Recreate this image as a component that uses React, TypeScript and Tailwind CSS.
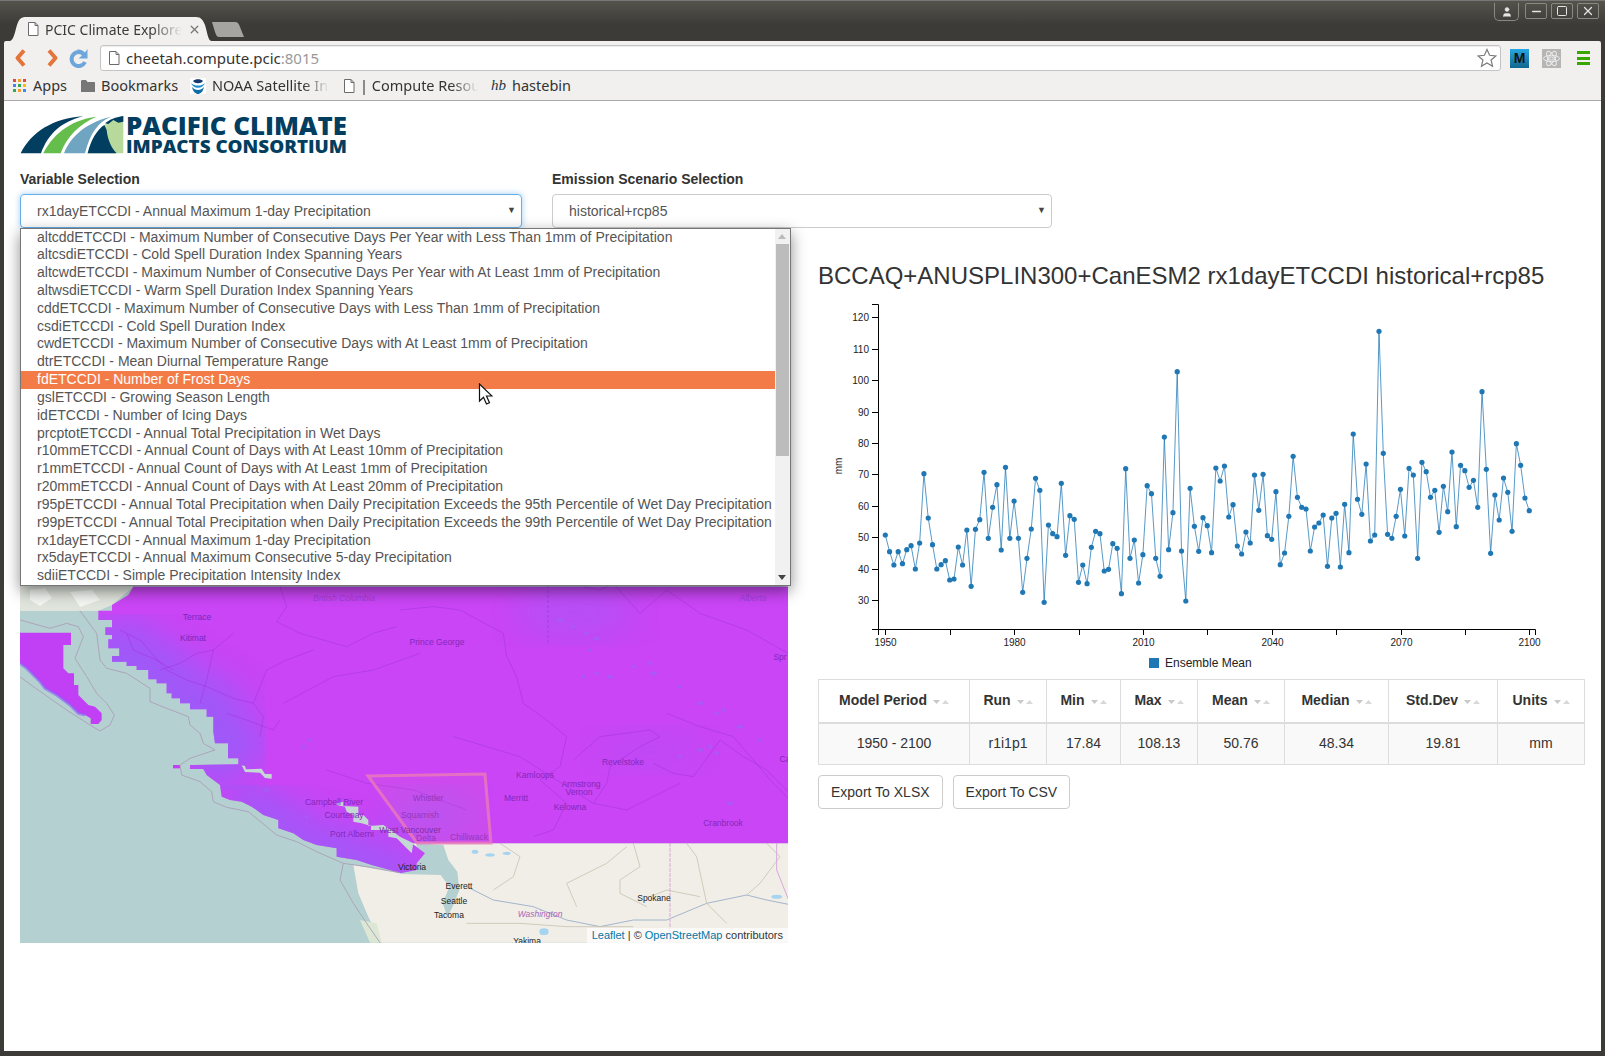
import React from 'react';
import { X, Minus, Square, User } from 'lucide-react';

const options = [
  'altcddETCCDI - Maximum Number of Consecutive Days Per Year with Less Than 1mm of Precipitation',
  'altcsdiETCCDI - Cold Spell Duration Index Spanning Years',
  'altcwdETCCDI - Maximum Number of Consecutive Days Per Year with At Least 1mm of Precipitation',
  'altwsdiETCCDI - Warm Spell Duration Index Spanning Years',
  'cddETCCDI - Maximum Number of Consecutive Days with Less Than 1mm of Precipitation',
  'csdiETCCDI - Cold Spell Duration Index',
  'cwdETCCDI - Maximum Number of Consecutive Days with At Least 1mm of Precipitation',
  'dtrETCCDI - Mean Diurnal Temperature Range',
  'fdETCCDI - Number of Frost Days',
  'gslETCCDI - Growing Season Length',
  'idETCCDI - Number of Icing Days',
  'prcptotETCCDI - Annual Total Precipitation in Wet Days',
  'r10mmETCCDI - Annual Count of Days with At Least 10mm of Precipitation',
  'r1mmETCCDI - Annual Count of Days with At Least 1mm of Precipitation',
  'r20mmETCCDI - Annual Count of Days with At Least 20mm of Precipitation',
  'r95pETCCDI - Annual Total Precipitation when Daily Precipitation Exceeds the 95th Percentile of Wet Day Precipitation',
  'r99pETCCDI - Annual Total Precipitation when Daily Precipitation Exceeds the 99th Percentile of Wet Day Precipitation',
  'rx1dayETCCDI - Annual Maximum 1-day Precipitation',
  'rx5dayETCCDI - Annual Maximum Consecutive 5-day Precipitation',
  'sdiiETCCDI - Simple Precipitation Intensity Index',
];

// point heights read off the chart, in page pixels
const seriesA = [855, 905, 945, 905, 941, 899, 887, 957, 879, 671, 804, 884, 957, 944, 932, 990, 987, 891, 945, 840, 1009, 838, 809, 667, 865, 772, 704, 900, 652, 865, 753, 865, 1027, 925, 837, 685, 721, 1057, 825, 851, 860, 700, 916, 797, 808, 997, 945, 1001, 892, 844, 851, 963, 958, 881, 895, 1031, 656, 925, 870, 999, 914, 707, 731, 925, 979, 561, 899, 788, 365, 903, 1053, 715, 829, 904, 803, 827, 908];
const seriesB = [534, 573, 528, 681, 644, 768, 792, 726, 759, 555, 661, 553, 737, 748, 605, 824, 789, 679, 499, 622, 652, 657, 783, 711, 699, 675, 829, 684, 670, 831, 643, 788, 432, 628, 673, 522, 753, 735, 124, 490, 733, 745, 679, 598, 738, 535, 555, 805, 517, 545, 622, 601, 727, 589, 665, 486, 710, 526, 542, 592, 571, 652, 305, 538, 790, 615, 690, 564, 607, 724, 461, 526, 624, 662];
const points = [...seriesA.map((y) => 250 + y / 3), ...seriesB.map((y) => 290 + y / 3)].map((y, i) => [885.3 + i * 4.293, y]);

const yTicks = [120, 110, 100, 90, 80, 70, 60, 50, 40, 30];
const xTicks = [1950, 1965, 1980, 1995, 2010, 2025, 2040, 2055, 2070, 2085, 2100];

const stats = [
  ['Model Period', '1950 - 2100', 'w-[151px]'],
  ['Run', 'r1i1p1', 'w-[77px]'],
  ['Min', '17.84', 'w-[74px]'],
  ['Max', '108.13', 'w-[77px]'],
  ['Mean', '50.76', 'w-[87px]'],
  ['Median', '48.34', 'w-[104px]'],
  ['Std.Dev', '19.81', 'w-[109px]'],
  ['Units', 'mm', 'w-[87px]'],
];

type Pt = number[];
// map outlines were measured on 3x crops of the two lower map quarters
const z = (pts: Pt[]) => pts.map(([x, y]) => `${x / 3},${570 + y / 3}`).join(' ');

const coast: Pt[] = [[400, 50], [385, 75], [336, 105], [336, 122], [295, 122], [295, 150], [336, 150], [336, 172], [316, 172], [316, 195], [336, 195], [336, 208], [325, 208], [325, 235], [358, 235], [358, 258], [336, 258], [336, 275], [380, 275], [380, 288], [410, 288], [410, 300], [445, 300], [445, 328], [470, 328], [470, 340], [500, 340], [500, 370], [515, 370], [515, 385], [540, 385], [540, 400], [570, 400], [570, 418], [620, 418], [620, 440], [640, 440], [640, 485], [645, 520], [684, 520], [684, 565], [715, 565], [715, 583]];
const island: Pt[] = [[580, 585], [570, 585], [570, 597], [610, 597], [620, 615], [640, 630], [660, 645], [665, 680], [690, 690], [725, 695], [755, 710], [790, 735], [835, 750], [835, 775], [880, 790], [910, 810], [950, 825], [1010, 835], [1010, 860], [1070, 870], [1115, 885], [1170, 900], [1200, 910], [1250, 900], [1250, 880], [1275, 850], [1235, 820]];
const purple: Pt[] = [[2364, 50], ...coast, ...island, [2364, 820]];
const haida: Pt[] = [[60, 188], [213, 188], [213, 225], [190, 225], [190, 295], [205, 310], [222, 310], [222, 345], [235, 345], [235, 375], [250, 390], [265, 405], [285, 410], [305, 430], [305, 450], [295, 462], [272, 462], [272, 445], [255, 435], [235, 430], [210, 405], [170, 375], [135, 355], [120, 335], [80, 295], [60, 280]];
const strait: Pt[] = [[1010, 700], [1030, 695], [1030, 708], [1075, 710], [1075, 735], [1090, 735], [1105, 750], [1105, 768], [1150, 765], [1165, 775], [1200, 800], [1240, 820], [1235, 850], [1190, 805], [1165, 800], [1165, 780], [1113, 780], [1113, 768], [1085, 760], [1060, 755], [1060, 735], [1040, 725], [1035, 710], [1010, 705]];
const sliver: Pt[] = [[725, 586], [735, 588], [738, 598], [785, 596], [795, 612], [815, 612], [815, 626], [795, 624], [780, 608], [735, 606]];
const shelfA: Pt[] = [[60, 320], [100, 350], [150, 385], [200, 420], [270, 465], [300, 483], [330, 465], [343, 435], [320, 400], [290, 370], [260, 320], [225, 265], [250, 200], [235, 170], [200, 160], [150, 175], [60, 150]];
const shelfB: Pt[] = [[240, 122], [290, 190], [300, 270], [320, 295], [380, 310], [450, 355], [450, 395], [500, 415], [565, 440], [570, 465], [600, 490], [610, 520], [645, 540], [570, 565], [540, 585], [545, 615], [600, 635], [635, 665], [640, 695], [680, 712], [745, 725], [800, 770], [830, 795], [890, 815], [950, 845], [1030, 880], [1100, 890], [1200, 908]];
const shelfC: Pt[] = [[1030, 880], [1020, 930], [1060, 1000], [1100, 1060], [1140, 1118]];
const land: Pt[] = [[1060, 885], [1200, 910], [1250, 900], [1275, 850], [1235, 820], [2364, 820], [2364, 1118], [1145, 1118], [1105, 1040], [1075, 970]];
const sound: Pt[] = [[1250, 820], [1330, 825], [1345, 870], [1372, 905], [1378, 960], [1358, 1010], [1342, 1040], [1328, 1000], [1348, 950], [1322, 915], [1200, 912], [1250, 880]];

const rivers: Pt[][] = [
  [[840, 50], [860, 110], [830, 155], [900, 190], [1040, 230], [1120, 190], [1190, 170]],
  [[360, 180], [420, 210], [500, 300], [560, 330], [620, 350], [700, 385], [760, 400], [800, 300], [860, 270], [940, 240]],
  [[700, 190], [640, 240], [620, 330], [600, 400]],
  [[380, 190], [400, 240], [470, 270], [520, 300]],
  [[480, 300], [540, 280], [590, 250], [640, 240]],
  [[680, 430], [740, 450], [820, 480], [840, 450]],
  [[760, 400], [790, 440], [780, 500]],
  [[1200, 120], [1300, 110], [1380, 120], [1510, 190], [1520, 260], [1550, 320], [1570, 400], [1640, 450], [1700, 500], [1680, 590], [1620, 630], [1700, 700], [1660, 780], [1600, 800]],
  [[1750, 50], [1800, 60], [1840, 40], [1920, 130], [2000, 60], [2100, 130], [2240, 180], [2364, 250]],
  [[1720, 570], [1800, 500], [1950, 480], [1980, 500], [1920, 530], [1830, 590], [1820, 640], [1780, 700]],
  [[1960, 580], [2020, 610], [2080, 620], [2160, 510], [2230, 560], [2300, 600], [2400, 700], [2480, 550], [2620, 640], [2764, 720]],
  [[1360, 500], [1460, 530], [1560, 560], [1780, 700], [1880, 720], [2040, 640]],
  [[2000, 430], [2100, 470], [2200, 500], [2320, 640], [2440, 760]],
  [[980, 600], [1040, 620], [1100, 640], [1240, 660], [1400, 720]],
  [[850, 400], [1000, 320], [1120, 300], [1260, 250]],
];
const lakes: Pt[] = [[1680, 150], [1720, 170], [1760, 190], [1790, 205], [1770, 240], [1790, 310], [1830, 320], [1750, 320], [1900, 290], [1960, 310], [1950, 280], [2040, 350], [2100, 400], [2150, 430], [2170, 420], [2220, 470], [2280, 510], [2040, 560], [2100, 540], [2150, 550], [2130, 530], [2190, 700], [930, 510], [910, 530], [800, 660], [920, 740]];
const landLines: Pt[][] = [
  [[1400, 950], [1480, 990], [1600, 1010], [1700, 1050], [1800, 1070], [1900, 1050], [2000, 1050], [2120, 1000]],
  [[2120, 1000], [2240, 975], [2300, 990], [2400, 1010], [2500, 1040], [2600, 1060]],
  [[1900, 820], [1920, 890], [1860, 930], [1860, 970], [1940, 1010]],
  [[2060, 820], [2090, 860], [2120, 1000], [2180, 1060]],
  [[2300, 820], [2340, 860], [2280, 940], [2240, 975]],
  [[1400, 1060], [1560, 1060], [1700, 1070], [1900, 1070]],
  [[1730, 1010], [1700, 940], [1820, 880], [1880, 830]],
  [[1500, 820], [1560, 860], [1540, 920], [1480, 960]],
  [[1950, 980], [2000, 960], [2100, 980]],
  [[2420, 830], [2500, 870], [2560, 850]],
  [[2450, 900], [2520, 960], [2600, 980]],
];

const mapLabels: [string, number, number, string, boolean?][] = [
  ['British Columbia', 344, 601, '#9f3fd8', true],
  ['Alberta', 753, 601, '#9f3fd8', true],
  ['Terrace', 197, 620, '#7428c0'],
  ['Kitimat', 193, 641, '#7428c0'],
  ['Prince George', 437, 645, '#8428bc'],
  ['Spr', 780, 660, '#8428bc'],
  ['Ca', 785, 762, '#8428bc'],
  ['Campbell River', 334, 805, '#8428bc'],
  ['Courtenay', 344, 818, '#8428bc'],
  ['Port Alberni', 352, 837, '#8428bc'],
  ['Whistler', 428, 801, '#9438bc'],
  ['Squamish', 420, 818, '#9438bc'],
  ['West Vancouver', 410, 833, '#7d2fa4'],
  ['Delta', 426, 841, '#9438bc'],
  ['Chilliwack', 469, 840, '#9438bc'],
  ['Kamloops', 535, 778, '#8428bc'],
  ['Armstrong', 581, 787, '#8428bc'],
  ['Vernon', 579, 795, '#8428bc'],
  ['Merritt', 516, 801, '#8428bc'],
  ['Kelowna', 570, 810, '#8428bc'],
  ['Revelstoke', 623, 765, '#8428bc'],
  ['Cranbrook', 723, 826, '#8428bc'],
  ['Victoria', 412, 870, '#222'],
  ['Everett', 459, 889, '#222'],
  ['Seattle', 454, 904, '#222'],
  ['Tacoma', 449, 918, '#222'],
  ['Spokane', 654, 901, '#222'],
  ['Washington', 540, 917, '#a866b8', true],
  ['Yakima', 527, 944, '#222'],
];

const ClimateMap = () => (
  <svg viewBox="20 248 768 695" className="block w-[768px] h-[695px]">
    <defs>
      <clipPath id="purpleClip">
        <polygon points={z(purple)} />
      </clipPath>
      <filter id="soft" x="-20%" y="-20%" width="140%" height="140%">
        <feGaussianBlur stdDeviation="16" />
      </filter>
    </defs>
    <rect x="20" y="248" width="768" height="695" fill="#b5d0d0" />
    <polygon points="20,248 133,248 133,587 112,605 98,611 20,611" fill="#dfe4dc" />
    <polygon points="30,590 45,588 52,598 40,606 30,600" fill="#f4f6f2" />
    <polygon points="70,592 92,590 100,600 80,607" fill="#f4f6f2" />
    <polygon points={z(land)} fill="#f1eee8" />
    <polygon points={z(sound)} fill="#b5d0d0" />
    <polygon points={z([[1080, 1050], [1130, 1060], [1145, 1118], [1110, 1118]])} fill="#dce8d4" />
    {[[1425, 845, 10, 6], [1470, 855, 14, 5], [1520, 850, 12, 5], [1632, 1085, 14, 10], [2330, 980, 16, 6]].map(([x, y, rx, ry]) => (
      <ellipse key={x} cx={x / 3} cy={570 + y / 3} rx={rx / 3} ry={ry / 3} fill="#a5d3f0" />
    ))}
    {landLines.map((l, i) => (
      <polyline key={i} points={z(l)} fill="none" stroke={i < 2 ? '#8fa6c4' : '#c5c3ae'} strokeWidth="0.8" strokeLinejoin="round" />
    ))}
    <line x1="670" y1="843" x2="670" y2="943" stroke="#d8a8d8" strokeWidth="1" strokeDasharray="4 1" />
    <polyline points={z([[2330, 820], [2330, 900], [2370, 1000], [2460, 1060], [2460, 1118]])} fill="none" stroke="#d8a8d8" strokeWidth="1" />

    <polygon points={z(purple)} fill="#c945f5" />
    <polygon points={z(haida)} fill="#c13ff5" />
    <polygon points={`${519 / 3},${570 + 585 / 3} ${540 / 3},${570 + 585 / 3} ${540 / 3},${570 + 595 / 3} ${519 / 3},${570 + 595 / 3}`} fill="#c13ff5" />
    <g clipPath="url(#purpleClip)">
      <polyline points={z(coast.slice(12))} fill="none" stroke="#8a63fa" strokeWidth="55" filter="url(#soft)" opacity="0.65" />
      <polyline points={z(island.slice(8, 24))} fill="none" stroke="#8a63fa" strokeWidth="46" filter="url(#soft)" opacity="0.6" />
      <ellipse cx="575" cy="612" rx="60" ry="25" fill="#a05cf8" filter="url(#soft)" opacity="0.45" />
      <ellipse cx="430" cy="815" rx="45" ry="22" fill="#a05cf8" filter="url(#soft)" opacity="0.5" />
      <ellipse cx="650" cy="750" rx="50" ry="18" fill="#a05cf8" filter="url(#soft)" opacity="0.25" />
      {rivers.map((l, i) => (
        <polyline key={i} points={z(l)} fill="none" stroke="#a536de" strokeWidth="0.7" strokeLinejoin="round" opacity="0.8" />
      ))}
      {lakes.map(([x, y], i) => (
        <ellipse key={i} cx={x / 3} cy={570 + y / 3} rx={i % 3 === 0 ? 3.5 : 2.2} ry={1.8} fill="#a75cf4" opacity="0.85" />
      ))}
      <line x1="548" y1="585" x2="548" y2="645" stroke="#a536de" strokeWidth="0.8" strokeDasharray="3 2" />
    </g>
    <polyline points={z(haida.slice(18, 26))} fill="none" stroke="#8a63fa" strokeWidth="3" opacity="0.6" />
    <polygon points={z(strait)} fill="#c5d8d4" />
    <polygon points={z(sliver)} fill="#c5d8d4" />
    <polygon points="368,776 485,774 491,843 417,843" fill="#f078c0" fillOpacity="0.12" stroke="#ea7ab8" strokeWidth="3" strokeOpacity="0.8" />
    <polyline points={z(shelfA)} fill="none" stroke="#ab9fb8" strokeWidth="0.9" />
    <polyline points={z(shelfB)} fill="none" stroke="#ab9fb8" strokeWidth="0.9" />
    <polyline points={z(shelfC)} fill="none" stroke="#ab9fb8" strokeWidth="0.9" />
    {mapLabels.map(([t, x, y, c, it]) => (
      <text key={t} x={x} y={y} textAnchor="middle" fontSize="8.5" fill={c} fontStyle={it ? 'italic' : 'normal'} fontFamily="'Liberation Sans', sans-serif">
        {t}
      </text>
    ))}
  </svg>
);

const Chart = () => (
  <svg viewBox="818 295 767 377" className="block w-[767px] h-[377px]" fontFamily="'Liberation Sans', sans-serif">
    <path d="M872 304.5H878.5V629.5H872M878.5 635V629.5H1535.5V635" fill="none" stroke="#000" />
    {yTicks.map((t, i) => {
      const y = Math.round(317.3 + i * 31.41) + 0.5;
      return (
        <g key={t}>
          <line x1="872" x2="878" y1={y} y2={y} stroke="#000" />
          <text x="869" y={y + 3.5} textAnchor="end" fontSize="10" fill="#222">{t}</text>
        </g>
      );
    })}
    {xTicks.map((t, i) => {
      const x = Math.round(885.3 + i * 64.4) + 0.5;
      return (
        <g key={t}>
          <line x1={x} x2={x} y1="629" y2="635" stroke="#000" />
          {i % 2 === 0 && <text x={x} y="646" textAnchor="middle" fontSize="10" fill="#222">{t}</text>}
        </g>
      );
    })}
    <text transform="translate(842 466) rotate(-90)" textAnchor="middle" fontSize="10" fill="#222">mm</text>
    <polyline points={points.map((p) => p.join(',')).join(' ')} fill="none" stroke="#1f77b4" strokeOpacity="0.75" strokeWidth="1" />
    {points.map(([x, y], i) => (
      <circle key={i} cx={x} cy={y} r="2.6" fill="#1f77b4" />
    ))}
    <rect x="1149" y="658" width="10" height="10" fill="#1f77b4" />
    <text x="1165" y="667" fontSize="12" fill="#222">Ensemble Mean</text>
  </svg>
);

const Logo = () => (
  <svg viewBox="15 116 335 38" className="block w-[335px] h-[38px] -ml-[5px]" fontFamily="'Open Sans', sans-serif" fontWeight="800" fill="#013e5f">
    <g transform="translate(15 110) scale(0.3333)">
      <path d="M218 130C232 75 262 35 325 18V130Z" fill="#b7d99b" />
      <path d="M218 130C228 90 245 60 268 45L275 60C278 90 290 115 305 130Z" />
      <path d="M270 40C285 28 300 22 325 18V35L310 38L295 30L280 42Z" />
      <path d="M17 130C50 65 115 25 205 19C140 35 100 70 78 130Z" />
      <path d="M85 130C110 80 160 30 245 20C195 40 155 80 137 130Z" fill="#65bd4b" />
      <path d="M147 130C165 85 205 40 288 20C250 35 225 70 210 130Z" fill="#6fa5c0" />
    </g>
    <text x="126" y="135" fontSize="25" textLength="221" lengthAdjust="spacingAndGlyphs">PACIFIC CLIMATE</text>
    <text x="126" y="153" fontSize="18" textLength="221" lengthAdjust="spacingAndGlyphs">IMPACTS CONSORTIUM</text>
  </svg>
);

const PageIcon = ({ className = '' }: { className?: string }) => (
  <svg viewBox="0 0 14 16" className={`w-[14px] h-[16px] shrink-0 ${className}`} fill="#fff" stroke="#6b6b6b">
    <path d="M2.5 1.5H9L12 4.5V14.5H2.5ZM9 1.5V4.5H12" />
  </svg>
);

const SortIcon = () => (
  <svg viewBox="0 0 16 6" className="inline-block w-[16px] h-[6px] ml-[6px]">
    <path d="M0 1H7L3.5 5Z" fill="#c8c8c8" />
    <path d="M9 5H16L12.5 1Z" fill="#d8d8d8" />
  </svg>
);

const fade = '[mask-image:linear-gradient(to_right,black_78%,transparent)]';

const Chrome = () => (
  <>
    <div className="relative h-[41px] shrink-0 bg-gradient-to-b from-[#55534c] to-[#3c3b37] to-60% border-t border-[#777]">
      <div className="absolute left-[6px] top-[16px] w-[206px] h-[24px]">
        <svg viewBox="0 0 206 24" className="absolute inset-0 w-[206px] h-[24px]">
          <path d="M0 25C8 25 8 18 11 8C13 2 15 0 20 0H190C195 0 197 3 199 8C202 18 202 24 206 24V25Z" fill="#f1f0ee" />
        </svg>
        <div className="relative flex items-center h-full pl-[20px] text-[14px] text-[#3c3b37] font-['Noto_Sans',sans-serif]">
          <PageIcon />
          <span className={`ml-[5px] w-[137px] overflow-hidden whitespace-nowrap ${fade}`}>PCIC Climate Explorer</span>
          <X size={13} strokeWidth={2.4} className="ml-[6px] text-[#777]" />
        </div>
      </div>
      <svg viewBox="0 0 32 15" className="absolute left-[212px] top-[21px] w-[32px] h-[15px]">
        <path d="M0 0H23C26 0 27 2 28 5L32 15H7C5 15 4 13 3 10Z" fill="#a6a4a0" />
      </svg>
      <div className="absolute right-[6px] top-[2px] flex gap-[4px] text-[#e4e4e4]">
        <div className="w-[25px] h-[18px] mr-[2px] rounded-b-[5px] border border-t-0 border-[#8a8882] flex items-center justify-center">
          <User size={12} fill="#e4e4e4" strokeWidth={1} />
        </div>
        <div className="w-[22px] h-[16px] rounded-[2px] border border-[#8a8882] flex items-center justify-center"><Minus size={13} strokeWidth={3} /></div>
        <div className="w-[22px] h-[16px] rounded-[2px] border border-[#8a8882] flex items-center justify-center"><Square size={12} strokeWidth={2} /></div>
        <div className="w-[22px] h-[16px] rounded-[2px] border border-[#8a8882] flex items-center justify-center"><X size={14} strokeWidth={2.2} /></div>
      </div>
    </div>
    <div className="mx-[4px] h-[34px] shrink-0 bg-[#f1f0ee] flex items-center font-['Noto_Sans',sans-serif] rounded-t-[2px]">
      <svg viewBox="0 0 90 20" className="w-[90px] h-[20px] ml-[7px] shrink-0">
        <path d="M13 2.500L6.500 10L13 17.500" fill="none" stroke="#e2743c" strokeWidth="4" strokeLinejoin="round" />
        <path d="M38 2.500L44.500 10L38 17.500" fill="none" stroke="#e2743c" strokeWidth="4" strokeLinejoin="round" />
        <path d="M73 6.500A7 7 0 1 0 74 14" fill="none" stroke="#6ea6dc" strokeWidth="4" />
        <path d="M66 1.500C70 1 72 3 73.500 5L76.500 1V10.500H67.500L71 7.500" fill="#6ea6dc" />
      </svg>
      <div className="ml-[-1px] w-[1401px] h-[26px] bg-white border border-[#c4c4c4] rounded-[3px] flex items-center pl-[6px] pr-[3px] text-[15px] text-[#333] shadow-[inset_0_1px_1px_rgba(0,0,0,0.08)]">
        <PageIcon />
        <span className="ml-[5px]">cheetah.compute.pcic<span className="text-[#999]">:8015</span></span>
        <svg viewBox="0 0 20 20" className="ml-auto w-[20px] h-[20px]" fill="#fff" stroke="#7a7a7a" strokeWidth="1.2">
          <path d="M10 1.500L12.600 7.300L18.800 7.900L14.100 12L15.500 18.200L10 15L4.500 18.200L5.900 12L1.200 7.900L7.400 7.300Z" />
        </svg>
      </div>
      <div className="ml-[9px] w-[19px] h-[19px] bg-gradient-to-b from-[#26a8e2] to-[#12668f] flex items-center justify-center font-['Liberation_Sans',sans-serif] font-bold text-[14px] text-[#111]">M</div>
      <svg viewBox="0 0 19 19" className="ml-[13px] w-[19px] h-[19px]" fill="none" stroke="#ececec" strokeWidth="1">
        <rect width="19" height="19" fill="#b5b5b5" stroke="none" />
        <ellipse cx="9.500" cy="9.500" rx="8" ry="3.200" />
        <ellipse cx="9.500" cy="9.500" rx="8" ry="3.200" transform="rotate(60 9.500 9.500)" />
        <ellipse cx="9.500" cy="9.500" rx="8" ry="3.200" transform="rotate(120 9.500 9.500)" />
        <circle cx="9.500" cy="9.500" r="1.700" />
      </svg>
      <div className="ml-[16px] w-[13px] flex flex-col gap-[2.500px]">
        <div className="h-[3px] bg-[#3aa600]" />
        <div className="h-[3px] bg-[#3aa600]" />
        <div className="h-[3px] bg-[#3aa600]" />
      </div>
    </div>
    <div className="mx-[4px] h-[26px] shrink-0 bg-[#f1f0ee] border-b border-[#aaa] text-[14.500px] text-[#333] font-['Noto_Sans',sans-serif] flex items-center pb-[4px] whitespace-nowrap">
      <div className="ml-[9px] w-[13px] h-[13px] grid grid-cols-3 gap-[1.500px]">
        {['#e04a3f', '#f0a030', '#e04a3f', '#4285f4', '#34a853', '#fbbc05', '#34a853', '#f0a030', '#4285f4'].map((c, i) => (
          <div key={i} style={{ backgroundColor: c }} />
        ))}
      </div>
      <span className="ml-[7px] w-[48px]">Apps</span>
      <svg viewBox="0 0 14 12" className="w-[14px] h-[12px] shrink-0"><path d="M0 1.500C0 .5 .5 0 1.500 0H5L6.500 2H13C13.600 2 14 2.400 14 3V12H0Z" fill="#777" /></svg>
      <span className="ml-[6px] w-[89px]">Bookmarks</span>
      <svg viewBox="0 0 16 16" className="w-[16px] h-[16px] shrink-0">
        <rect width="16" height="16" fill="#fff" />
        <path d="M1 5A7.500 7.500 0 0 0 15 5C13 7 11 7.500 8 7.500C5 7.500 3 7 1 5Z" fill="#1a8ccb" />
        <path d="M2 9C5 13 11 13 14 9C13 14 10 16 8 16C6 16 3 14 2 9Z" fill="#0e6ca8" />
        <path d="M3 3C5 .5 11 .5 13 3C11 6 5 6 3 3Z" fill="#17396f" />
      </svg>
      <span className={`ml-[6px] w-[117px] overflow-hidden ${fade}`}>NOAA Satellite Information</span>
      <PageIcon className="ml-[13px]" />
      <span className={`ml-[4px] w-[118px] overflow-hidden ${fade}`}>| Compute Resources</span>
      <span className="ml-[13px] w-[16px] font-['Liberation_Serif',serif] italic text-[15px] text-[#17394a]">hb</span>
      <span className="ml-[5px]">hastebin</span>
    </div>
  </>
);

export default function App() {
  return (
    <div className="w-[1605px] h-[1056px] overflow-hidden bg-[#3c3b37] flex flex-col font-['Liberation_Sans',Arial,sans-serif] text-[14px] text-[#333]">
      <Chrome />
      <div className="relative mx-[4px] h-[950px] bg-white px-[16px] pt-[15px]">
        <Logo />
        <div className="flex gap-[30px] mt-[15px]">
          <div className="relative w-[502px]">
            <div className="font-bold leading-[20px] mb-[5px]">Variable Selection</div>
            <div className="h-[34px] rounded-[4px] border border-[#66afe9] shadow-[0_0_6px_rgba(102,175,233,0.6)] flex items-center pl-[16px] pr-[5px] text-[#555]">
              rx1dayETCCDI - Annual Maximum 1-day Precipitation
              <span className="ml-auto text-[9px] text-[#444]">▼</span>
            </div>
            <div className="absolute z-20 left-0 top-[59px] w-[771px] h-[358px] bg-white border border-[#767676] shadow-[0_5px_14px_rgba(0,0,0,0.45)] overflow-hidden flex">
              <div className="w-[754px] -mt-[0.500px] text-[#555] leading-[17.830px] whitespace-nowrap">
                {options.map((o) => (
                  <div key={o} className={`h-[17.830px] pl-[16px] ${o.startsWith('fdETCCDI') ? 'bg-[#f37b47] text-white' : ''}`}>
                    {o}
                  </div>
                ))}
              </div>
              <div className="relative flex-1 bg-[#f1f1f1]">
                <div className="absolute left-[1px] right-[1px] top-[15px] h-[212px] bg-[#bcbcbc]" />
                <div className="absolute left-[3px] top-[5px] border-x-[4px] border-b-[5px] border-x-transparent border-b-[#bbb]" />
                <div className="absolute left-[3px] bottom-[5px] border-x-[4px] border-t-[5px] border-x-transparent border-t-[#444]" />
              </div>
              <svg viewBox="0 0 15 23" className="absolute left-[457px] top-[154px] w-[15px] h-[23px]">
                <path d="M1.500 1V18L5.500 14.200L8.500 21L11.500 19.700L8.500 13H14Z" fill="#fff" stroke="#111" strokeWidth="1.200" />
              </svg>
            </div>
          </div>
          <div className="w-[500px]">
            <div className="font-bold leading-[20px] mb-[5px]">Emission Scenario Selection</div>
            <div className="h-[34px] rounded-[4px] border border-[#ccc] flex items-center pl-[16px] pr-[5px] text-[#555]">
              historical+rcp85
              <span className="ml-auto text-[9px] text-[#444]">▼</span>
            </div>
          </div>
        </div>
        <div className="flex gap-[30px] mt-[20px]">
          <div className="relative w-[768px] h-[695px]">
            <ClimateMap />
            <div className="absolute right-0 bottom-0 h-[15px] px-[5px] bg-white/70 text-[11px] leading-[15px] text-[#333]">
              <span className="text-[#0078a8]">Leaflet</span> | © <span className="text-[#0078a8]">OpenStreetMap</span> contributors
            </div>
          </div>
          <div className="w-[767px]">
            <h3 className="mt-[15px] text-[24px] leading-[26px] text-[#333] whitespace-nowrap">BCCAQ+ANUSPLIN300+CanESM2 rx1dayETCCDI historical+rcp85</h3>
            <div className="mt-[6px]"><Chart /></div>
            <table className="mt-[7px] w-[767px] table-fixed border-collapse border border-[#ddd]">
              <thead>
                <tr className="h-[43px]">
                  {stats.map(([h, , w]) => (
                    <th key={h} className={`${w} border border-b-2 border-[#ddd] font-bold text-center whitespace-nowrap`}>
                      {h}<SortIcon />
                    </th>
                  ))}
                </tr>
              </thead>
              <tbody>
                <tr className="h-[42px] bg-[#f9f9f9]">
                  {stats.map(([h, v]) => (
                    <td key={h} className="border border-[#ddd] text-center">{v}</td>
                  ))}
                </tr>
              </tbody>
            </table>
            <div className="flex gap-[10px] mt-[10px]">
              <button className="h-[34px] px-[12px] rounded-[4px] border border-[#ccc] bg-white">Export To XLSX</button>
              <button className="h-[34px] px-[12px] rounded-[4px] border border-[#ccc] bg-white">Export To CSV</button>
            </div>
          </div>
        </div>
      </div>
    </div>
  );
}
